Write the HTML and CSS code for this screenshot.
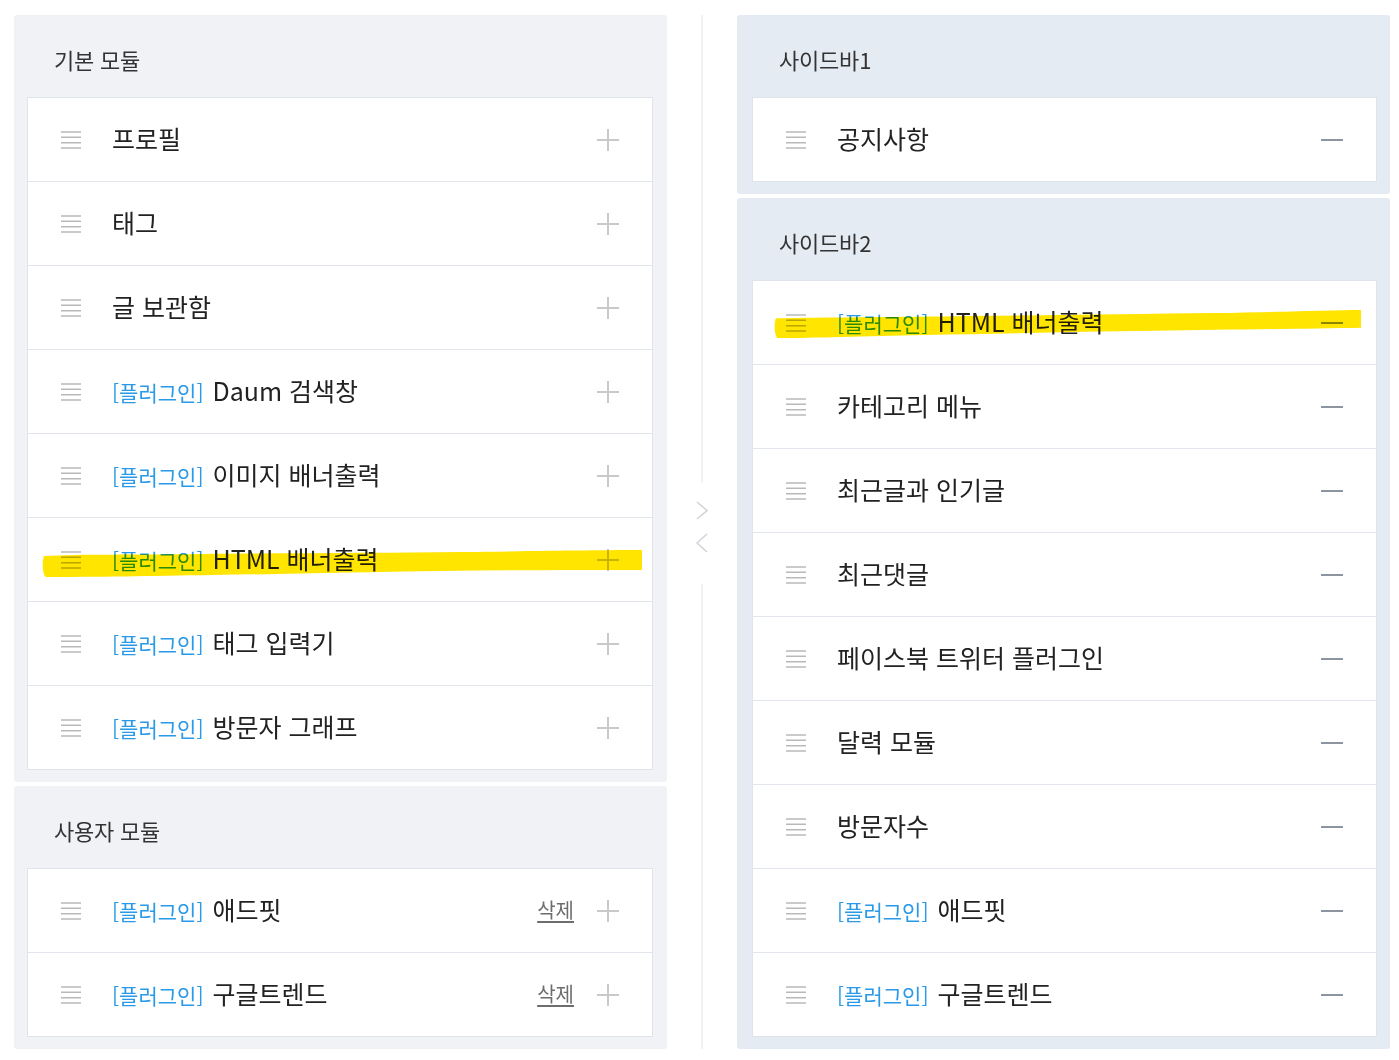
FILE: index.html
```html
<!DOCTYPE html>
<html lang="ko">

<head>
    <meta charset="UTF-8">
    <meta name="viewport" content="width=device-width, initial-scale=1.0">
    <title>사이드바 설정</title>
    <link rel="stylesheet" href="styles.css">
</head>

<body>
    <div class="editor">
        <!-- 모듈 목록 -->
        <div class="column">
            <section class="panel">
                <h2 class="panel-title">기본 모듈</h2>
                <ul class="module-list">
                    <li class="module-row">
                        <span class="drag-handle"><svg width="20" height="18" viewBox="0 0 20 18"><path d="M0 1h20M0 6.3h20M0 11.7h20M0 17h20" /></svg></span>
                        <span class="module-name">프로필</span>
                        <button class="row-btn add-btn"><svg width="22" height="22" viewBox="0 0 22 22"><path d="M0 11h22M11 0v22" /></svg></button>
                    </li>
                    <li class="module-row">
                        <span class="drag-handle"><svg width="20" height="18" viewBox="0 0 20 18"><path d="M0 1h20M0 6.3h20M0 11.7h20M0 17h20" /></svg></span>
                        <span class="module-name">태그</span>
                        <button class="row-btn add-btn"><svg width="22" height="22" viewBox="0 0 22 22"><path d="M0 11h22M11 0v22" /></svg></button>
                    </li>
                    <li class="module-row">
                        <span class="drag-handle"><svg width="20" height="18" viewBox="0 0 20 18"><path d="M0 1h20M0 6.3h20M0 11.7h20M0 17h20" /></svg></span>
                        <span class="module-name">글 보관함</span>
                        <button class="row-btn add-btn"><svg width="22" height="22" viewBox="0 0 22 22"><path d="M0 11h22M11 0v22" /></svg></button>
                    </li>
                    <li class="module-row">
                        <span class="drag-handle"><svg width="20" height="18" viewBox="0 0 20 18"><path d="M0 1h20M0 6.3h20M0 11.7h20M0 17h20" /></svg></span>
                        <span class="module-name"><span class="plugin-tag">[플러그인]</span> Daum 검색창</span>
                        <button class="row-btn add-btn"><svg width="22" height="22" viewBox="0 0 22 22"><path d="M0 11h22M11 0v22" /></svg></button>
                    </li>
                    <li class="module-row">
                        <span class="drag-handle"><svg width="20" height="18" viewBox="0 0 20 18"><path d="M0 1h20M0 6.3h20M0 11.7h20M0 17h20" /></svg></span>
                        <span class="module-name"><span class="plugin-tag">[플러그인]</span> 이미지 배너출력</span>
                        <button class="row-btn add-btn"><svg width="22" height="22" viewBox="0 0 22 22"><path d="M0 11h22M11 0v22" /></svg></button>
                    </li>
                    <li class="module-row">
                        <span class="drag-handle"><svg width="20" height="18" viewBox="0 0 20 18"><path d="M0 1h20M0 6.3h20M0 11.7h20M0 17h20" /></svg></span>
                        <span class="module-name"><span class="plugin-tag">[플러그인]</span> HTML 배너출력</span>
                        <button class="row-btn add-btn"><svg width="22" height="22" viewBox="0 0 22 22"><path d="M0 11h22M11 0v22" /></svg></button>
                        <svg class="highlight highlight-left" viewBox="0 0 600 28" preserveAspectRatio="none"><path d="M2 6 C40 4 90 5 160 4 C260 3 340 3 420 2 C500 1 560 0 600 0 L600 20 C540 20 470 20 400 21 C320 22 250 24 170 25 C110 26 50 27 4 27 C0 24 0 10 2 6 Z" /></svg>
                    </li>
                    <li class="module-row">
                        <span class="drag-handle"><svg width="20" height="18" viewBox="0 0 20 18"><path d="M0 1h20M0 6.3h20M0 11.7h20M0 17h20" /></svg></span>
                        <span class="module-name"><span class="plugin-tag">[플러그인]</span> 태그 입력기</span>
                        <button class="row-btn add-btn"><svg width="22" height="22" viewBox="0 0 22 22"><path d="M0 11h22M11 0v22" /></svg></button>
                    </li>
                    <li class="module-row">
                        <span class="drag-handle"><svg width="20" height="18" viewBox="0 0 20 18"><path d="M0 1h20M0 6.3h20M0 11.7h20M0 17h20" /></svg></span>
                        <span class="module-name"><span class="plugin-tag">[플러그인]</span> 방문자 그래프</span>
                        <button class="row-btn add-btn"><svg width="22" height="22" viewBox="0 0 22 22"><path d="M0 11h22M11 0v22" /></svg></button>
                    </li>
                </ul>
            </section>

            <section class="panel">
                <h2 class="panel-title">사용자 모듈</h2>
                <ul class="module-list">
                    <li class="module-row">
                        <span class="drag-handle"><svg width="20" height="18" viewBox="0 0 20 18"><path d="M0 1h20M0 6.3h20M0 11.7h20M0 17h20" /></svg></span>
                        <span class="module-name"><span class="plugin-tag">[플러그인]</span> 애드핏</span>
                        <a href="#" class="delete-link">삭제</a>
                        <button class="row-btn add-btn"><svg width="22" height="22" viewBox="0 0 22 22"><path d="M0 11h22M11 0v22" /></svg></button>
                    </li>
                    <li class="module-row">
                        <span class="drag-handle"><svg width="20" height="18" viewBox="0 0 20 18"><path d="M0 1h20M0 6.3h20M0 11.7h20M0 17h20" /></svg></span>
                        <span class="module-name"><span class="plugin-tag">[플러그인]</span> 구글트렌드</span>
                        <a href="#" class="delete-link">삭제</a>
                        <button class="row-btn add-btn"><svg width="22" height="22" viewBox="0 0 22 22"><path d="M0 11h22M11 0v22" /></svg></button>
                    </li>
                </ul>
            </section>
        </div>

        <!-- 이동 화살표 -->
        <div class="divider">
            <span class="divider-line divider-top"></span>
            <div class="arrows">
                <svg class="arrow" width="12" height="19" viewBox="0 0 12 19"><path d="M1 1l10 8.5L1 18" /></svg>
                <svg class="arrow" width="12" height="20" viewBox="0 0 12 20"><path d="M11 1L1 10l10 9" /></svg>
            </div>
            <span class="divider-line divider-bottom"></span>
        </div>

        <!-- 사이드바 -->
        <div class="column">
            <section class="panel panel-sidebar">
                <h2 class="panel-title">사이드바1</h2>
                <ul class="module-list">
                    <li class="module-row">
                        <span class="drag-handle"><svg width="20" height="18" viewBox="0 0 20 18"><path d="M0 1h20M0 6.3h20M0 11.7h20M0 17h20" /></svg></span>
                        <span class="module-name">공지사항</span>
                        <button class="row-btn remove-btn"><svg width="22" height="2" viewBox="0 0 22 2"><path d="M0 1h22" /></svg></button>
                    </li>
                </ul>
            </section>

            <section class="panel panel-sidebar">
                <h2 class="panel-title">사이드바2</h2>
                <ul class="module-list">
                    <li class="module-row">
                        <span class="drag-handle"><svg width="20" height="18" viewBox="0 0 20 18"><path d="M0 1h20M0 6.3h20M0 11.7h20M0 17h20" /></svg></span>
                        <span class="module-name"><span class="plugin-tag">[플러그인]</span> HTML 배너출력</span>
                        <button class="row-btn remove-btn"><svg width="22" height="2" viewBox="0 0 22 2"><path d="M0 1h22" /></svg></button>
                        <svg class="highlight highlight-right" viewBox="0 0 587 27" preserveAspectRatio="none"><path d="M2 8 C50 7 110 7 180 6 C280 5 360 4 440 3 C510 2 560 0 587 0 L587 17 C530 18 460 19 380 20 C300 21 220 23 150 24 C90 25 40 27 3 27 C0 22 0 12 2 8 Z" /></svg>
                    </li>
                    <li class="module-row">
                        <span class="drag-handle"><svg width="20" height="18" viewBox="0 0 20 18"><path d="M0 1h20M0 6.3h20M0 11.7h20M0 17h20" /></svg></span>
                        <span class="module-name">카테고리 메뉴</span>
                        <button class="row-btn remove-btn"><svg width="22" height="2" viewBox="0 0 22 2"><path d="M0 1h22" /></svg></button>
                    </li>
                    <li class="module-row">
                        <span class="drag-handle"><svg width="20" height="18" viewBox="0 0 20 18"><path d="M0 1h20M0 6.3h20M0 11.7h20M0 17h20" /></svg></span>
                        <span class="module-name">최근글과 인기글</span>
                        <button class="row-btn remove-btn"><svg width="22" height="2" viewBox="0 0 22 2"><path d="M0 1h22" /></svg></button>
                    </li>
                    <li class="module-row">
                        <span class="drag-handle"><svg width="20" height="18" viewBox="0 0 20 18"><path d="M0 1h20M0 6.3h20M0 11.7h20M0 17h20" /></svg></span>
                        <span class="module-name">최근댓글</span>
                        <button class="row-btn remove-btn"><svg width="22" height="2" viewBox="0 0 22 2"><path d="M0 1h22" /></svg></button>
                    </li>
                    <li class="module-row">
                        <span class="drag-handle"><svg width="20" height="18" viewBox="0 0 20 18"><path d="M0 1h20M0 6.3h20M0 11.7h20M0 17h20" /></svg></span>
                        <span class="module-name">페이스북 트위터 플러그인</span>
                        <button class="row-btn remove-btn"><svg width="22" height="2" viewBox="0 0 22 2"><path d="M0 1h22" /></svg></button>
                    </li>
                    <li class="module-row">
                        <span class="drag-handle"><svg width="20" height="18" viewBox="0 0 20 18"><path d="M0 1h20M0 6.3h20M0 11.7h20M0 17h20" /></svg></span>
                        <span class="module-name">달력 모듈</span>
                        <button class="row-btn remove-btn"><svg width="22" height="2" viewBox="0 0 22 2"><path d="M0 1h22" /></svg></button>
                    </li>
                    <li class="module-row">
                        <span class="drag-handle"><svg width="20" height="18" viewBox="0 0 20 18"><path d="M0 1h20M0 6.3h20M0 11.7h20M0 17h20" /></svg></span>
                        <span class="module-name">방문자수</span>
                        <button class="row-btn remove-btn"><svg width="22" height="2" viewBox="0 0 22 2"><path d="M0 1h22" /></svg></button>
                    </li>
                    <li class="module-row">
                        <span class="drag-handle"><svg width="20" height="18" viewBox="0 0 20 18"><path d="M0 1h20M0 6.3h20M0 11.7h20M0 17h20" /></svg></span>
                        <span class="module-name"><span class="plugin-tag">[플러그인]</span> 애드핏</span>
                        <button class="row-btn remove-btn"><svg width="22" height="2" viewBox="0 0 22 2"><path d="M0 1h22" /></svg></button>
                    </li>
                    <li class="module-row">
                        <span class="drag-handle"><svg width="20" height="18" viewBox="0 0 20 18"><path d="M0 1h20M0 6.3h20M0 11.7h20M0 17h20" /></svg></span>
                        <span class="module-name"><span class="plugin-tag">[플러그인]</span> 구글트렌드</span>
                        <button class="row-btn remove-btn"><svg width="22" height="2" viewBox="0 0 22 2"><path d="M0 1h22" /></svg></button>
                    </li>
                </ul>
            </section>
        </div>
    </div>
</body>

</html>
```

FILE: styles.css
```css
body {
    font-family: "Noto Sans CJK KR", "Noto Sans", sans-serif;
    margin: 0;
    padding: 15px 0 0 14px;
    background-color: #fff;
    color: #222;
}

.editor {
    display: flex;
    align-items: stretch;
}

.column {
    width: 653px;
    display: flex;
    flex-direction: column;
    gap: 4px;
}

.panel {
    background-color: #f0f2f6;
    border-radius: 3px;
    padding: 0 14px 12px 13px;
}

.panel-sidebar {
    background-color: #e5ebf2;
    padding: 0 13px 12px 15px;
}

.panel-title {
    height: 82px;
    box-sizing: border-box;
    margin: 0;
    padding: 6px 0 0 27px;
    display: flex;
    align-items: center;
    font-size: 22px;
    font-weight: 400;
    color: #333;
    letter-spacing: -0.2px;
}

.module-list {
    list-style: none;
    margin: 0;
    padding: 0;
    background: #fff;
    border: 1px solid #dfe3ea;
}

.module-row {
    position: relative;
    display: flex;
    align-items: center;
    height: 83px;
    box-sizing: content-box;
    padding: 0 33px;
    border-bottom: 1px solid #e2e5ec;
}

.module-row:last-child {
    border-bottom: none;
}

.drag-handle {
    display: flex;
    width: 20px;
    margin-right: 31px;
}

.drag-handle svg path {
    stroke: #b9b9b9;
    stroke-width: 1.6;
}

.module-name {
    flex: 1;
    font-size: 25px;
    color: #222;
    white-space: nowrap;
    margin-bottom: 3px;
}

.plugin-tag {
    font-size: 21px;
    color: #2a9ae8;
    margin-right: 2px;
}

.delete-link {
    font-size: 20px;
    color: #6d6d6d;
    text-decoration: underline;
    text-underline-offset: 3px;
    margin-right: 23px;
    margin-bottom: 2px;
}

.row-btn {
    display: flex;
    align-items: center;
    justify-content: center;
    padding: 0;
    border: none;
    background: none;
    cursor: pointer;
}

.add-btn svg path {
    stroke: #c9c9c9;
    stroke-width: 2;
}

.remove-btn svg path {
    stroke: #8c95a1;
    stroke-width: 2;
}

.divider {
    width: 70px;
    display: flex;
    flex-direction: column;
    align-items: center;
}

.divider-line {
    width: 2px;
    background-color: #f1f1f3;
}

.divider-top {
    height: 468px;
}

.divider-bottom {
    flex: 1;
}

.arrows {
    height: 101px;
    display: flex;
    flex-direction: column;
    align-items: center;
    gap: 13px;
    padding-top: 18px;
    box-sizing: border-box;
}

.arrow path {
    fill: none;
    stroke: #cfd3d9;
    stroke-width: 1.5;
}

/* 형광펜 표시 */
.highlight {
    position: absolute;
    mix-blend-mode: multiply;
    pointer-events: none;
}

.highlight path {
    fill: #ffe500;
}

.highlight-left {
    left: 14px;
    top: 32px;
    width: 600px;
    height: 28px;
}

.highlight-right {
    left: 21px;
    top: 29px;
    width: 587px;
    height: 28px;
}
```
